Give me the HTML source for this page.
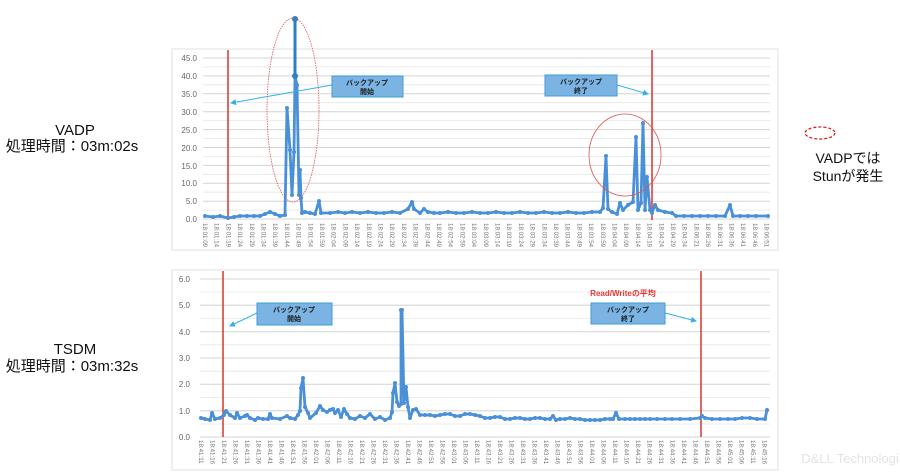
<!DOCTYPE html>
<html><head><meta charset="utf-8"><style>
html,body{margin:0;padding:0;background:#fff;}
svg{display:block;font-family:"Liberation Sans","Noto Sans CJK JP",sans-serif;}
.yl{font-size:8px;fill:#666;text-anchor:end;}
.xl{font-size:6.2px;fill:#777;}
.g{stroke:#e6e6e6;stroke-width:0.8;}
.gm{stroke:#d4d4d4;stroke-width:1;}
.ln{fill:none;stroke:#4a90d9;stroke-width:2.8;stroke-linejoin:round;marker-mid:url(#dot);marker-start:url(#dot);marker-end:url(#dot);}
.cb{fill:#7bb4e3;stroke:#3f9bd6;stroke-width:1;}
.ct{font-size:7px;fill:#1a1a1a;text-anchor:middle;font-weight:bold;}
.ar{stroke:#35b0e6;stroke-width:1;}
.big{font-size:15px;fill:#111;text-anchor:middle;}
</style></head><body>
<svg width="900" height="472" viewBox="0 0 900 472">
<defs><marker id="ah" markerWidth="6" markerHeight="6" refX="5" refY="3" orient="auto"><path d="M0,0 L6,3 L0,6 z" fill="#35b0e6"/></marker>
<marker id="dot" markerUnits="userSpaceOnUse" markerWidth="6" markerHeight="6" refX="3" refY="3"><circle cx="3" cy="3" r="2" fill="#4a90d9"/></marker></defs>

<!-- Left labels -->
<text class="big" x="75" y="135">VADP</text>
<text class="big" x="72" y="151">処理時間：03m:02s</text>
<text class="big" x="75" y="354">TSDM</text>
<text class="big" x="72" y="371">処理時間：03m:32s</text>

<!-- Chart 1 -->
<rect x="172" y="49" width="606" height="201" fill="#fff" stroke="#e0e0e0"/>
<g>
<line class="g" x1="203" x2="770" y1="66.9" y2="66.9"/><line class="g" x1="203" x2="770" y1="84.8" y2="84.8"/>
<line class="g" x1="203" x2="770" y1="102.7" y2="102.7"/><line class="g" x1="203" x2="770" y1="120.6" y2="120.6"/>
<line class="g" x1="203" x2="770" y1="138.5" y2="138.5"/><line class="g" x1="203" x2="770" y1="156.4" y2="156.4"/>
<line class="g" x1="203" x2="770" y1="174.3" y2="174.3"/><line class="g" x1="203" x2="770" y1="192.2" y2="192.2"/>
<line class="g" x1="203" x2="770" y1="210.1" y2="210.1"/>
<line class="gm" x1="203" x2="770" y1="58" y2="58"/><line class="gm" x1="203" x2="770" y1="75.9" y2="75.9"/>
<line class="gm" x1="203" x2="770" y1="93.8" y2="93.8"/><line class="gm" x1="203" x2="770" y1="111.7" y2="111.7"/>
<line class="gm" x1="203" x2="770" y1="129.6" y2="129.6"/><line class="gm" x1="203" x2="770" y1="147.5" y2="147.5"/>
<line class="gm" x1="203" x2="770" y1="165.4" y2="165.4"/><line class="gm" x1="203" x2="770" y1="183.3" y2="183.3"/>
<line class="gm" x1="203" x2="770" y1="201.2" y2="201.2"/><line class="gm" x1="203" x2="770" y1="219" y2="219"/>
</g>
<g class="yl">
<text x="197" y="61">45.0</text><text x="197" y="79">40.0</text><text x="197" y="97">35.0</text>
<text x="197" y="115">30.0</text><text x="197" y="133">25.0</text><text x="197" y="151">20.0</text>
<text x="197" y="169">15.0</text><text x="197" y="186">10.0</text><text x="197" y="204">5.0</text>
<text x="197" y="222">0.0</text>
</g>
<g class="xl">
<text transform="translate(203,223) rotate(90)">18:01:09</text>
<text transform="translate(214.7,223) rotate(90)">18:01:14</text>
<text transform="translate(226.4,223) rotate(90)">18:01:19</text>
<text transform="translate(238.1,223) rotate(90)">18:01:24</text>
<text transform="translate(249.8,223) rotate(90)">18:01:29</text>
<text transform="translate(261.5,223) rotate(90)">18:01:34</text>
<text transform="translate(273.2,223) rotate(90)">18:01:39</text>
<text transform="translate(284.9,223) rotate(90)">18:01:44</text>
<text transform="translate(296.6,223) rotate(90)">18:01:49</text>
<text transform="translate(308.3,223) rotate(90)">18:01:54</text>
<text transform="translate(320,223) rotate(90)">18:01:59</text>
<text transform="translate(331.7,223) rotate(90)">18:02:04</text>
<text transform="translate(343.4,223) rotate(90)">18:02:09</text>
<text transform="translate(355.1,223) rotate(90)">18:02:14</text>
<text transform="translate(366.8,223) rotate(90)">18:02:19</text>
<text transform="translate(378.5,223) rotate(90)">18:02:24</text>
<text transform="translate(390.2,223) rotate(90)">18:02:29</text>
<text transform="translate(401.9,223) rotate(90)">18:02:34</text>
<text transform="translate(413.6,223) rotate(90)">18:02:39</text>
<text transform="translate(425.3,223) rotate(90)">18:02:44</text>
<text transform="translate(437,223) rotate(90)">18:02:49</text>
<text transform="translate(448.7,223) rotate(90)">18:02:54</text>
<text transform="translate(460.4,223) rotate(90)">18:02:59</text>
<text transform="translate(472.1,223) rotate(90)">18:03:04</text>
<text transform="translate(483.8,223) rotate(90)">18:03:09</text>
<text transform="translate(495.5,223) rotate(90)">18:03:14</text>
<text transform="translate(507.2,223) rotate(90)">18:03:19</text>
<text transform="translate(518.9,223) rotate(90)">18:03:24</text>
<text transform="translate(530.6,223) rotate(90)">18:03:29</text>
<text transform="translate(542.3,223) rotate(90)">18:03:34</text>
<text transform="translate(554,223) rotate(90)">18:03:39</text>
<text transform="translate(565.7,223) rotate(90)">18:03:44</text>
<text transform="translate(577.4,223) rotate(90)">18:03:49</text>
<text transform="translate(589.1,223) rotate(90)">18:03:54</text>
<text transform="translate(600.8,223) rotate(90)">18:03:59</text>
<text transform="translate(612.5,223) rotate(90)">18:04:04</text>
<text transform="translate(624.2,223) rotate(90)">18:04:09</text>
<text transform="translate(635.9,223) rotate(90)">18:04:14</text>
<text transform="translate(647.6,223) rotate(90)">18:04:19</text>
<text transform="translate(659.3,223) rotate(90)">18:04:24</text>
<text transform="translate(671,223) rotate(90)">18:04:29</text>
<text transform="translate(682.7,223) rotate(90)">18:04:34</text>
<text transform="translate(694.4,223) rotate(90)">18:06:21</text>
<text transform="translate(706.1,223) rotate(90)">18:06:26</text>
<text transform="translate(717.8,223) rotate(90)">18:06:31</text>
<text transform="translate(729.5,223) rotate(90)">18:06:36</text>
<text transform="translate(741.2,223) rotate(90)">18:06:41</text>
<text transform="translate(752.9,223) rotate(90)">18:06:46</text>
<text transform="translate(764.6,223) rotate(90)">18:06:51</text>
</g>
<line x1="228" y1="50" x2="228" y2="220" stroke="#d9413b" stroke-width="1.6"/>
<line x1="652" y1="50" x2="652" y2="220" stroke="#d9413b" stroke-width="1.6"/>
<polyline class="ln" points="205,216 213,217 220,216 228,218 234,217 240,216 247,216 254,216 260,216 265,214 270,212 275,214 280,216 285,215 287,108 290,150 292,195 294,152 295,76 297,85 299,195 300,170 301,198 302,213 305,212 310,213 315,214 319,201 321,213 330,213 338,212 345,213 352,212 360,213 368,212 376,213 384,213 392,212 400,213 408,209 412,202 414,209 420,213 424,209 428,212 434,213 440,213 448,212 456,213 464,213 472,212 480,213 488,213 496,212 504,213 512,213 520,212 528,213 536,213 544,212 552,213 560,213 568,212 576,213 584,213 592,212 600,212 603,208 606,156 608,209 612,212 617,214 620,203 623,210 628,205 633,202 636,137 638,210 641,203 643,123 645,210 647,177 650,210 652,213 655,205 658,210 665,212 672,213 676,216 684,216 692,216 700,216 708,216 716,216 725,216 730,205 733,216 740,216 748,216 756,216 768,216"/>
<line x1="295" y1="19" x2="295" y2="76" stroke="#2f7fc4" stroke-width="3"/>
<circle cx="295" cy="19" r="3" fill="#2f7fc4"/><circle cx="295" cy="76" r="3" fill="#2f7fc4"/>
<ellipse cx="293" cy="110" rx="26" ry="92" fill="none" stroke="#e05050" stroke-width="0.8" stroke-dasharray="1.5,1"/>
<ellipse cx="625" cy="155" rx="36" ry="41" fill="none" stroke="#e05050" stroke-width="0.8"/>
<line class="ar" x1="332" y1="85" x2="231" y2="103" marker-end="url(#ah)"/>
<rect class="cb" x="332" y="76" width="71" height="21"/>
<text class="ct" x="367" y="85">バックアップ</text><text class="ct" x="367" y="94">開始</text>
<line class="ar" x1="617" y1="85" x2="648" y2="94" marker-end="url(#ah)"/>
<rect class="cb" x="545" y="75" width="72" height="21"/>
<text class="ct" x="581" y="84">バックアップ</text><text class="ct" x="581" y="93">終了</text>

<!-- Legend -->
<ellipse cx="820" cy="133" rx="15" ry="6" fill="none" stroke="#e02020" stroke-width="1.3" stroke-dasharray="3,2"/>
<text x="848" y="163" font-size="14" text-anchor="middle" fill="#111">VADPでは</text>
<text x="848" y="181" font-size="14" text-anchor="middle" fill="#111">Stunが発生</text>

<!-- Chart 2 -->
<rect x="172" y="270" width="606" height="200" fill="#fff" stroke="#e0e0e0"/>
<g>
<line class="g" x1="200" x2="770" y1="292" y2="292"/><line class="g" x1="200" x2="770" y1="305.2" y2="305.2"/>
<line class="g" x1="200" x2="770" y1="318.4" y2="318.4"/><line class="g" x1="200" x2="770" y1="344.8" y2="344.8"/>
<line class="g" x1="200" x2="770" y1="358" y2="358"/><line class="g" x1="200" x2="770" y1="371.2" y2="371.2"/>
<line class="g" x1="200" x2="770" y1="397.6" y2="397.6"/><line class="g" x1="200" x2="770" y1="410.8" y2="410.8"/>
<line class="g" x1="200" x2="770" y1="424" y2="424"/>
<line class="gm" x1="200" x2="770" y1="279" y2="279"/><line class="gm" x1="200" x2="770" y1="305.3" y2="305.3"/>
<line class="gm" x1="200" x2="770" y1="331.7" y2="331.7"/><line class="gm" x1="200" x2="770" y1="358" y2="358"/>
<line class="gm" x1="200" x2="770" y1="384.3" y2="384.3"/><line class="gm" x1="200" x2="770" y1="410.7" y2="410.7"/>
<line class="gm" x1="200" x2="770" y1="437" y2="437"/>
</g>
<g class="yl">
<text x="190" y="282">6.0</text><text x="190" y="308">5.0</text><text x="190" y="335">4.0</text>
<text x="190" y="361">3.0</text><text x="190" y="387">2.0</text><text x="190" y="414">1.0</text>
<text x="190" y="440">0.0</text>
</g>
<g class="xl">
<text transform="translate(199,440) rotate(90)">18:41:11</text>
<text transform="translate(210.5,440) rotate(90)">18:41:16</text>
<text transform="translate(222,440) rotate(90)">18:41:21</text>
<text transform="translate(233.5,440) rotate(90)">18:41:26</text>
<text transform="translate(245,440) rotate(90)">18:41:31</text>
<text transform="translate(256.5,440) rotate(90)">18:41:36</text>
<text transform="translate(268,440) rotate(90)">18:41:41</text>
<text transform="translate(279.5,440) rotate(90)">18:41:46</text>
<text transform="translate(291,440) rotate(90)">18:41:51</text>
<text transform="translate(302.5,440) rotate(90)">18:41:56</text>
<text transform="translate(314,440) rotate(90)">18:42:01</text>
<text transform="translate(325.5,440) rotate(90)">18:42:06</text>
<text transform="translate(337,440) rotate(90)">18:42:11</text>
<text transform="translate(348.5,440) rotate(90)">18:42:16</text>
<text transform="translate(360,440) rotate(90)">18:42:21</text>
<text transform="translate(371.5,440) rotate(90)">18:42:26</text>
<text transform="translate(383,440) rotate(90)">18:42:31</text>
<text transform="translate(394.5,440) rotate(90)">18:42:36</text>
<text transform="translate(406,440) rotate(90)">18:42:41</text>
<text transform="translate(417.5,440) rotate(90)">18:42:46</text>
<text transform="translate(429,440) rotate(90)">18:42:51</text>
<text transform="translate(440.5,440) rotate(90)">18:42:56</text>
<text transform="translate(452,440) rotate(90)">18:43:01</text>
<text transform="translate(463.5,440) rotate(90)">18:43:06</text>
<text transform="translate(475,440) rotate(90)">18:43:11</text>
<text transform="translate(486.5,440) rotate(90)">18:43:16</text>
<text transform="translate(498,440) rotate(90)">18:43:21</text>
<text transform="translate(509.5,440) rotate(90)">18:43:26</text>
<text transform="translate(521,440) rotate(90)">18:43:31</text>
<text transform="translate(532.5,440) rotate(90)">18:43:36</text>
<text transform="translate(544,440) rotate(90)">18:43:41</text>
<text transform="translate(555.5,440) rotate(90)">18:43:46</text>
<text transform="translate(567,440) rotate(90)">18:43:51</text>
<text transform="translate(578.5,440) rotate(90)">18:43:56</text>
<text transform="translate(590,440) rotate(90)">18:44:01</text>
<text transform="translate(601.5,440) rotate(90)">18:44:06</text>
<text transform="translate(613,440) rotate(90)">18:44:11</text>
<text transform="translate(624.5,440) rotate(90)">18:44:16</text>
<text transform="translate(636,440) rotate(90)">18:44:21</text>
<text transform="translate(647.5,440) rotate(90)">18:44:26</text>
<text transform="translate(659,440) rotate(90)">18:44:31</text>
<text transform="translate(670.5,440) rotate(90)">18:44:36</text>
<text transform="translate(682,440) rotate(90)">18:44:41</text>
<text transform="translate(693.5,440) rotate(90)">18:44:46</text>
<text transform="translate(705,440) rotate(90)">18:44:51</text>
<text transform="translate(716.5,440) rotate(90)">18:44:56</text>
<text transform="translate(728,440) rotate(90)">18:45:01</text>
<text transform="translate(739.5,440) rotate(90)">18:45:06</text>
<text transform="translate(751,440) rotate(90)">18:45:11</text>
<text transform="translate(762.5,440) rotate(90)">18:45:16</text>
</g>
<line x1="223" y1="271" x2="223" y2="437" stroke="#d9413b" stroke-width="1.6"/>
<line x1="701" y1="271" x2="701" y2="437" stroke="#d9413b" stroke-width="1.6"/>
<polyline class="ln" points="201,418 205,419 210,420 212,413 215,419 220,418 224,415 226,411 230,415 235,418 237,413 240,418 245,416 247,415 250,418 255,420 258,418 263,419 268,419 270,414 272,418 280,419 287,416 290,418 295,419 298,415 300,411 301,388 303,378 305,407 308,413 310,418 316,413 320,406 323,410 327,412 330,410 333,409 335,413 338,410 341,417 344,409 347,414 350,418 355,419 360,416 365,418 370,414 375,419 380,417 385,420 390,418 392,412 393,393 395,383 397,402 399,406 401,404 401,310 402,310 404,403 406,387 408,407 410,418 413,410 416,409 420,415 425,415 430,415 435,416 440,415 445,414 450,414 455,416 460,416 465,414 470,414 475,415 480,416 485,418 490,418 495,417 500,417 505,419 510,419 515,418 520,418 525,419 530,419 535,418 540,418 545,419 550,419 553,416 556,420 560,419 565,419 570,418 575,419 580,419 585,420 590,420 595,420 600,420 605,419 610,419 613,419 616,413 619,419 625,419 630,419 635,419 640,419 645,419 650,419 657,419 665,419 672,419 680,419 690,419 700,418 702,416 705,418 712,419 720,419 728,419 735,419 742,418 750,418 757,419 765,419 767,410"/>
<line class="ar" x1="257" y1="313" x2="230" y2="326" marker-end="url(#ah)"/>
<rect class="cb" x="257" y="303" width="75" height="22"/>
<text class="ct" x="294" y="312">バックアップ</text><text class="ct" x="294" y="321">開始</text>
<line class="ar" x1="665" y1="313" x2="696" y2="321" marker-end="url(#ah)"/>
<rect class="cb" x="591" y="303" width="74" height="21"/>
<text class="ct" x="628" y="312">バックアップ</text><text class="ct" x="628" y="321">終了</text>
<text x="623" y="296" font-size="8" font-weight="bold" fill="#ee3333" text-anchor="middle">Read/Writeの平均</text>

<text x="850" y="463" font-size="13" fill="#e4e4e4" text-anchor="middle">D&amp;LL Technologi</text>
</svg>
</body></html>
